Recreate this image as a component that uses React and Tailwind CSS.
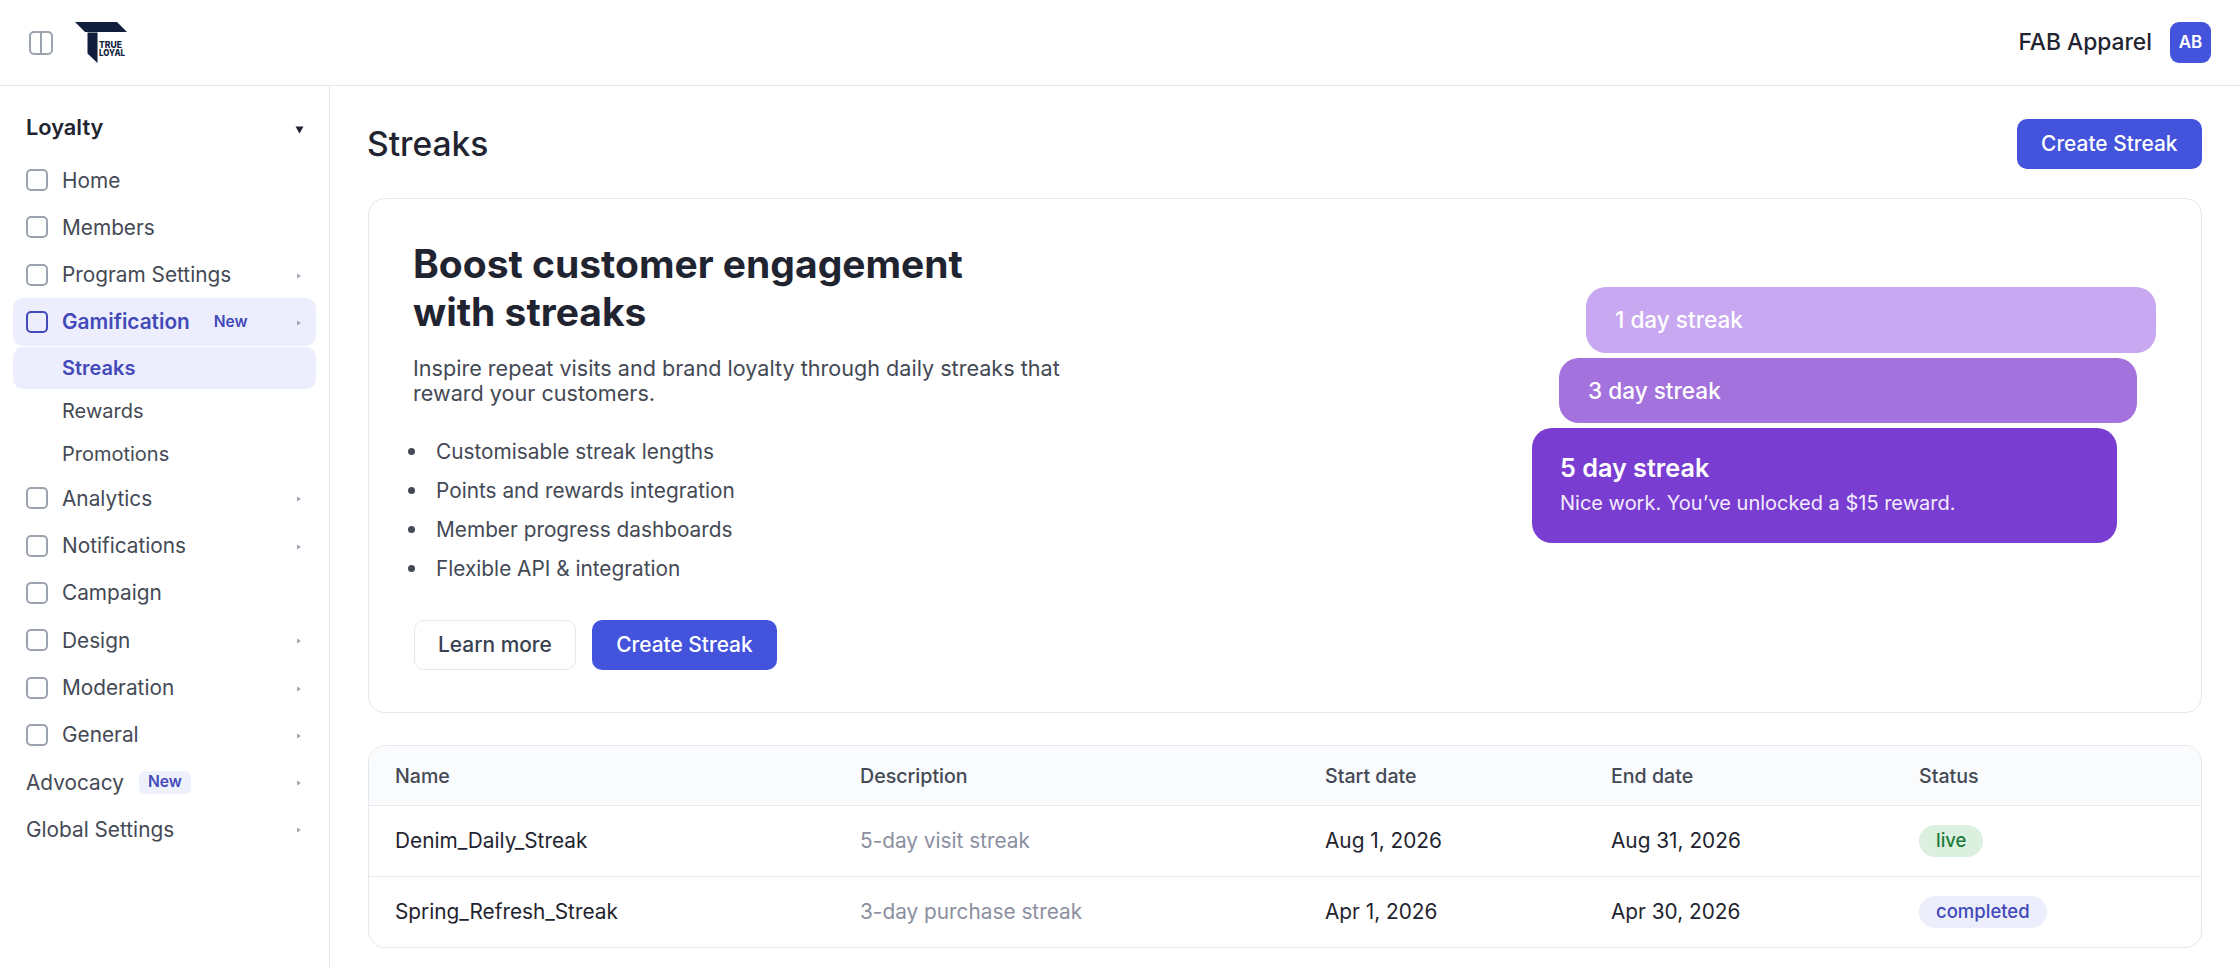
const Box = ({ active }) => (
  <span className={`block w-[22px] h-[22px] shrink-0 rounded-[5px] border-2 ${active ? "border-[#4349b8]" : "border-[#9ca3af]"}`} />
);

const Tri = () => (
  <svg width="6" height="8" viewBox="0 0 6 8" className="absolute right-[14px] top-1/2 -translate-y-1/2 mt-px">
    <path d="M1 1.5 L5 4 L1 6.5 Z" fill="#a3a8b3" />
  </svg>
);

const Row = ({ label, arrow, active }) => (
  <div className={`relative h-[47.3px] mx-[13px] pl-[13px] flex items-center gap-[14px] rounded-[10px] ${active ? "bg-[#eceefd]" : ""}`}>
    <Box active={active} />
    <span className={`text-[20.8px] ${active ? "font-semibold text-[#4349b8]" : "text-[#444955]"}`}>{label}</span>
    {active && <span className="ml-[10px] text-[15.6px] font-semibold text-[#4349b8]">New</span>}
    {arrow && <Tri />}
  </div>
);

const Sub = ({ label, active }) => (
  <div className={`h-[42px] mt-px mx-[13px] pl-[49px] flex items-center rounded-[10px] text-[20px] ${active ? "bg-[#eceefd] font-semibold text-[#4349b8]" : "text-[#444955]"}`}>
    {label}
  </div>
);

const Plain = ({ label, badge }) => (
  <div className="relative h-[47.3px] mx-[13px] pl-[13px] flex items-center rounded-[10px]">
    <span className="text-[20.8px] text-[#444955]">{label}</span>
    {badge && (
      <span className="ml-[15px] h-[23px] w-[52px] flex items-center justify-center rounded-[6px] bg-[#eef0fc] text-[15.6px] font-semibold text-[#4349b8]">New</span>
    )}
    <Tri />
  </div>
);

const Logo = () => (
  <svg width="54" height="42" viewBox="0 0 54 42" className="block">
    <path d="M0 0 H42 L52 10 H10 Z" fill="#101d3d" />
    <path d="M12.5 10.5 H22.5 V41 L12.5 31.5 Z" fill="#101d3d" />
    <text x="24" y="26" fontFamily="Inter, sans-serif" fontWeight="800" fontSize="9.6" fill="#101d3d" textLength="23" lengthAdjust="spacingAndGlyphs">TRUE</text>
    <text x="24" y="33.5" fontFamily="Inter, sans-serif" fontWeight="800" fontSize="9.6" fill="#101d3d" textLength="26" lengthAdjust="spacingAndGlyphs">LOYAL</text>
  </svg>
);

const Btn = ({ children }) => (
  <button className="h-[50px] px-[24.5px] rounded-[10px] bg-[#4353dc] text-white text-[20.9px] font-[550]">{children}</button>
);

const TH = ({ w, children }) => (
  <th className={`${w} pl-[26px] pt-[3px] text-left font-[550] text-[19.6px] text-[#444955]`}>{children}</th>
);

const TD = ({ children, muted }) => (
  <td className={`pl-[26px] text-[20.8px] ${muted ? "text-[#8b8fa0]" : "text-[#1f2430]"}`}>{children}</td>
);

const Pill = ({ green, children }) => (
  <span className={`inline-flex items-center h-[32px] px-[17px] rounded-full text-[18.5px] font-medium ${green ? "bg-[#dcf0e0] text-[#1e7a3a]" : "bg-[#eceefc] text-[#4349b8]"}`}>
    {children}
  </span>
);

const Item = ({ children }) => (
  <li className="flex items-center">
    <span className="-ml-[5px] mr-[21px] w-[7px] h-[7px] rounded-full bg-[#444955]" />
    {children}
  </li>
);

export default function App() {
  return (
    <div className="h-screen overflow-hidden flex flex-col bg-white font-['Inter',sans-serif]">
      <header className="h-[86px] shrink-0 border-b border-[#e5e7eb] flex items-center justify-between pl-[29px] pr-[29px]">
        <div className="flex items-center gap-[22px]">
          <svg width="24" height="24" viewBox="0 0 24 24" fill="none" stroke="#9ca3af" strokeWidth="2" className="block">
            <rect x="1" y="1" width="22" height="22" rx="4" />
            <path d="M12 1 V23" />
          </svg>
          <Logo />
        </div>
        <div className="flex items-center gap-[18px]">
          <span className="text-[22.8px] font-[550] text-[#1f2430]">FAB Apparel</span>
          <span className="w-[41px] h-[41px] rounded-[9px] bg-[#4353dc] flex items-center justify-center text-white text-[17px] font-semibold">AB</span>
        </div>
      </header>

      <div className="flex-1 flex min-h-0">
        <aside className="w-[330px] shrink-0 border-r border-[#e5e7eb] pt-[22px]">
          <div className="relative h-[39px] mb-[9.5px] mx-[13px] pl-[13px] flex items-center">
            <span className="text-[21.8px] font-semibold text-[#1f2430]">Loyalty</span>
            <svg width="9" height="8" viewBox="0 0 9 8" className="absolute right-[12px] top-1/2 -translate-y-1/2 mt-[2px]">
              <path d="M0.5 0.5 H8.5 L4.5 7.5 Z" fill="#1f2430" />
            </svg>
          </div>
          <Row label="Home" />
          <Row label="Members" />
          <Row label="Program Settings" arrow />
          <Row label="Gamification" arrow active />
          <Sub label="Streaks" active />
          <Sub label="Rewards" />
          <Sub label="Promotions" />
          <Row label="Analytics" arrow />
          <Row label="Notifications" arrow />
          <Row label="Campaign" />
          <Row label="Design" arrow />
          <Row label="Moderation" arrow />
          <Row label="General" arrow />
          <Plain label="Advocacy" badge />
          <Plain label="Global Settings" />
        </aside>

        <main className="flex-1 min-w-0 pt-[32px] pl-[38px] pr-[38px]">
          <div className="flex items-center justify-between h-[51px]">
            <h1 className="mt-[1px] -ml-px text-[33.6px] font-[550] text-[#1f2430]">Streaks</h1>
            <Btn>Create Streak</Btn>
          </div>

          <section className="mt-[29px] h-[515px] rounded-[17px] border border-[#e5e7eb] pt-[41px] pl-[44px] pr-[45px] flex justify-between items-start">
            <div>
              <h2 className="text-[39px] leading-[48px] font-[650] text-[#1f2430]">
                Boost customer engagement
                <br />
                with streaks
              </h2>
              <p className="mt-[20px] w-[670px] text-[21.6px] leading-[25px] text-[#444955]">
                Inspire repeat visits and brand loyalty through daily streaks that reward your customers.
              </p>
              <ul className="mt-[26px] text-[20.8px] leading-[39px] text-[#444955]">
                <Item>Customisable streak lengths</Item>
                <Item>Points and rewards integration</Item>
                <Item>Member progress dashboards</Item>
                <Item>Flexible API &amp; integration</Item>
              </ul>
              <div className="mt-[32px] ml-px flex gap-[16px]">
                <button className="h-[50px] px-[23px] rounded-[10px] border border-[#e5e7eb] bg-white text-[20.9px] font-[550] text-[#374151]">Learn more</button>
                <Btn>Create Streak</Btn>
              </div>
            </div>

            <div className="mt-[47px] w-[624px] flex flex-col gap-[5px]">
              <div className="ml-[54px] h-[66px] rounded-[20px] bg-[#c8a8f0] pl-[29px] flex items-center text-white text-[22.6px] font-[550]">1 day streak</div>
              <div className="ml-[27px] mr-[19px] h-[65px] rounded-[20px] bg-[#a372dd] pl-[29px] flex items-center text-white text-[22.6px] font-[550]">3 day streak</div>
              <div className="mr-[39px] h-[115px] rounded-[20px] bg-[#7a3dd1] pl-[28px] flex flex-col justify-center text-white">
                <span className="text-[25.2px] font-semibold leading-[34px]">5 day streak</span>
                <span className="mt-[4px] pb-[3px] text-[20px] leading-[28px] text-[#f3ecfc]">Nice work. You’ve unlocked a $15 reward.</span>
              </div>
            </div>
          </section>

          <div className="mt-[32px] rounded-[17px] border border-[#e5e7eb] overflow-hidden">
            <table className="w-full table-fixed border-collapse">
              <thead>
                <tr className="h-[59px] bg-[#f9fbfd] border-b border-[#e5e7eb]">
                  <TH w="w-[465px]">Name</TH>
                  <TH w="w-[465px]">Description</TH>
                  <TH w="w-[286px]">Start date</TH>
                  <TH w="w-[308px]">End date</TH>
                  <TH w="w-auto">Status</TH>
                </tr>
              </thead>
              <tbody>
                <tr className="h-[71px] border-b border-[#e5e7eb]">
                  <TD>Denim_Daily_Streak</TD>
                  <TD muted>5-day visit streak</TD>
                  <TD>Aug 1, 2026</TD>
                  <TD>Aug 31, 2026</TD>
                  <td className="pl-[26px]"><Pill green>live</Pill></td>
                </tr>
                <tr className="h-[71px]">
                  <TD>Spring_Refresh_Streak</TD>
                  <TD muted>3-day purchase streak</TD>
                  <TD>Apr 1, 2026</TD>
                  <TD>Apr 30, 2026</TD>
                  <td className="pl-[26px]"><Pill>completed</Pill></td>
                </tr>
              </tbody>
            </table>
          </div>
        </main>
      </div>
    </div>
  );
}
